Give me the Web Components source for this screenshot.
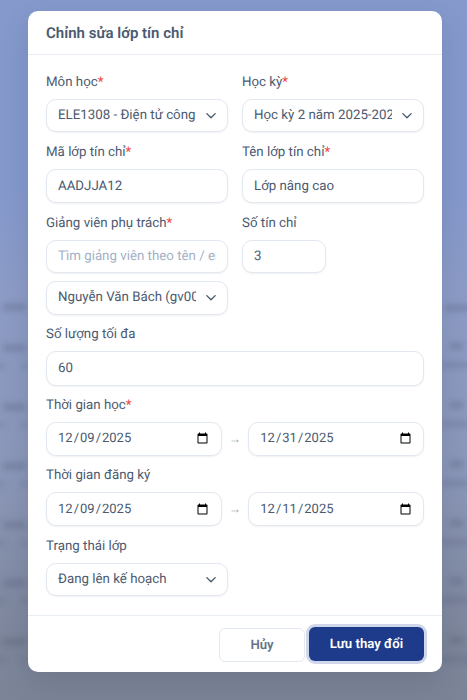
<!DOCTYPE html>
<html>
<head>
<meta charset="utf-8">
<title>Chỉnh sửa lớp tín chỉ</title>
<style>
    html, body { margin: 0; height: 100%; }
    body { overflow: hidden; font-family: Roboto, "Liberation Sans", sans-serif; }
</style>
</head>
<body>
<edit-page>
    <blurred-rows slot="backdrop"></blurred-rows>
    <edit-dialog heading="Chỉnh sửa lớp tín chỉ">
        <form-field label="Môn học" required>
            <form-select value="ELE1308 - Điện tử công nghiệp"></form-select>
        </form-field>
        <form-field label="Học kỳ" required>
            <form-select value="Học kỳ 2 năm 2025-2026"></form-select>
        </form-field>
        <form-field label="Mã lớp tín chỉ" required>
            <form-input value="AADJJA12" style="--h:34.5px"></form-input>
        </form-field>
        <form-field label="Tên lớp tín chỉ" required>
            <form-input value="Lớp nâng cao" style="--h:34.5px"></form-input>
        </form-field>
        <form-field label="Giảng viên phụ trách" required>
            <form-input placeholder="Tìm giảng viên theo tên / email"></form-input>
            <form-select value="Nguyễn Văn Bách (gv001@example.edu)"></form-select>
        </form-field>
        <form-field label="Số tín chỉ">
            <form-input value="3" narrow></form-input>
        </form-field>
        <form-field label="Số lượng tối đa" wide>
            <form-input value="60" style="--h:34.5px"></form-input>
        </form-field>
        <form-field label="Thời gian học" required wide>
            <date-range from="2025-12-09" to="2025-12-31"></date-range>
        </form-field>
        <form-field label="Thời gian đăng ký" wide>
            <date-range from="2025-12-09" to="2025-12-11" style="--h:34px"></date-range>
        </form-field>
        <form-field label="Trạng thái lớp">
            <form-select value="Đang lên kế hoạch"></form-select>
        </form-field>
    </edit-dialog>
</edit-page>

<script>
const CONTROL_CSS = `
    .control {
        display: block;
        box-sizing: border-box;
        width: 100%;
        height: var(--h, 33.4px);
        margin: 0;
        padding: 0 11px;
        background: #fff;
        border: 1px solid #e2e8f0;
        border-radius: 10px;
        box-shadow: 0 1px 2px rgba(15, 23, 42, .06);
        color: #4b5a70;
        font: 400 13.3px Roboto, "Liberation Sans", sans-serif;
        text-rendering: geometricPrecision;
        outline: none;
    }
`;

class EditPage extends HTMLElement {
    constructor() {
        super();
        this.attachShadow({ mode: 'open' });
        this.shadowRoot.innerHTML = `
            <style>
                :host {
                    display: block;
                    position: relative;
                    height: 700px;
                    overflow: hidden;
                    background: linear-gradient(#8599cd 0, #8599cd 190px, #8d9cc6 300px, #8b97b8 480px, #7d869b 640px, #7b8497 700px);
                }
                .wrap {
                    position: relative;
                    display: flex;
                    padding: 11px 0 0 28px;
                }
            </style>
            <slot name="backdrop"></slot>
            <div class="wrap"><slot></slot></div>
        `;
    }
}

// the page behind the dialog, only visible as blurred text rows on both sides
class BlurredRows extends HTMLElement {
    constructor() {
        super();
        this.attachShadow({ mode: 'open' });
        const rows = [348, 407, 466, 525, 583, 642].map(y => `
            <i style="top:${y - 3}px;left:3px;width:23px"></i>
            <i style="top:${y + 15}px;left:-4px;width:9px;opacity:.55"></i>
            <i style="top:${y + 15}px;left:21px;width:8px;opacity:.55"></i>
            <i style="top:${y - 5}px;left:450px;width:13px"></i>
            <i style="top:${y + 14}px;left:441px;width:30px;opacity:.7"></i>
        `).join('');
        this.shadowRoot.innerHTML = `
            <style>
                :host { position: absolute; inset: 0; filter: blur(3px); }
                i { position: absolute; height: 6px; background: rgba(70, 80, 110, .32); }
            </style>
            <i style="top:304px;left:3px;width:23px"></i>
            <i style="top:305px;left:445px;width:30px"></i>
            ${rows}
        `;
    }
}

class EditDialog extends HTMLElement {
    constructor() {
        super();
        this.attachShadow({ mode: 'open' });
        this.shadowRoot.innerHTML = `
            <style>
                :host {
                    display: block;
                    box-sizing: border-box;
                    width: 414px;
                    height: 661px;
                    background: #fff;
                    border-radius: 10px;
                    box-shadow: 0 10px 30px rgba(15, 23, 42, .12);
                    font-family: Roboto, "Liberation Sans", sans-serif;
                    text-rendering: geometricPrecision;
                }
                header {
                    box-sizing: border-box;
                    height: 44px;
                    padding: 0 18px;
                    display: flex;
                    align-items: center;
                    border-bottom: 1px solid #e9eef5;
                    color: #4b5a70;
                    font-size: 15px;
                    font-weight: 600;
                }
                .body {
                    box-sizing: border-box;
                    height: 560px;
                    padding: 18px 18px 0;
                    display: grid;
                    grid-template-columns: 182px 182px;
                    column-gap: 14px;
                    row-gap: 10.5px;
                    align-content: start;
                }
                footer {
                    box-sizing: border-box;
                    height: 57px;
                    padding: 12px 18px 0;
                    border-top: 1px solid #e9eef5;
                    display: flex;
                    justify-content: flex-end;
                    align-items: flex-start;
                    gap: 4px;
                }
                button {
                    box-sizing: border-box;
                    height: 34px;
                    border-radius: 6px;
                    font: 600 13.2px Roboto, "Liberation Sans", sans-serif;
                    text-rendering: geometricPrecision;
                }
                .cancel {
                    width: 86px;
                    background: #fff;
                    border: 1px solid #e2e8f0;
                    color: #64748b;
                }
                .save {
                    width: 115px;
                    margin-top: -1px;
                    background: #1e3a8a;
                    border: 0;
                    color: #fff;
                    box-shadow: 0 0 0 3px #d0d7ea;
                }
            </style>
            <header>${this.getAttribute('heading')}</header>
            <div class="body"><slot></slot></div>
            <footer>
                <button class="cancel" type="button">Hủy</button>
                <button class="save" type="button">Lưu thay đổi</button>
            </footer>
        `;
    }
}

class FormField extends HTMLElement {
    constructor() {
        super();
        this.attachShadow({ mode: 'open' });
        const star = this.hasAttribute('required') ? '<b>*</b>' : '';
        this.shadowRoot.innerHTML = `
            <style>
                :host {
                    display: flex;
                    flex-direction: column;
                    gap: 8px;
                    min-width: 0;
                }
                :host([wide]) { grid-column: 1 / -1; }
                label {
                    display: block;
                    height: 18px;
                    line-height: 20.8px;
                    color: #4b5a70;
                    font-size: 13.3px;
                }
                b { color: #ef4444; font-weight: 400; }
            </style>
            <label>${this.getAttribute('label')}${star}</label>
            <slot></slot>
        `;
    }
}

class FormInput extends HTMLElement {
    constructor() {
        super();
        this.attachShadow({ mode: 'open' });
        const value = this.getAttribute('value') || '';
        const placeholder = this.getAttribute('placeholder') || '';
        this.shadowRoot.innerHTML = `
            <style>
                ${CONTROL_CSS}
                :host { display: block; }
                :host([narrow]) { width: 84px; }
                input::placeholder { color: #a3b1c6; opacity: 1; }
            </style>
            <input class="control" value="${value}" placeholder="${placeholder}">
        `;
    }
}

class FormSelect extends HTMLElement {
    constructor() {
        super();
        this.attachShadow({ mode: 'open' });
        const value = this.getAttribute('value');
        this.shadowRoot.innerHTML = `
            <style>
                ${CONTROL_CSS}
                :host { display: block; position: relative; }
                select.control { appearance: none; padding-right: 31px; }
                svg { position: absolute; right: 11px; top: 11px; pointer-events: none; }
            </style>
            <select class="control"><option>${value}</option></select>
            <svg width="12" height="12" viewBox="0 0 12 12" fill="none" stroke="#475569" stroke-width="1.3" stroke-linecap="round" stroke-linejoin="round">
                <path d="M1.8 3.6l4.2 4.2 4.2-4.2"/>
            </svg>
        `;
    }
}

class DateRange extends HTMLElement {
    constructor() {
        super();
        this.attachShadow({ mode: 'open' });
        this.shadowRoot.innerHTML = `
            <style>
                ${CONTROL_CSS}
                :host {
                    display: grid;
                    grid-template-columns: 1fr 26.6px 1fr;
                    align-items: center;
                }
                span { text-align: center; color: #94a3b8; font-size: 12px; }
                input.control { padding-left: 10px; padding-right: 9.5px; font-size: 13px; }
            </style>
            <input class="control" type="date" value="${this.getAttribute('from')}">
            <span>→</span>
            <input class="control" type="date" value="${this.getAttribute('to')}">
        `;
    }
}

customElements.define('edit-page', EditPage);
customElements.define('blurred-rows', BlurredRows);
customElements.define('edit-dialog', EditDialog);
customElements.define('form-field', FormField);
customElements.define('form-input', FormInput);
customElements.define('form-select', FormSelect);
customElements.define('date-range', DateRange);
</script>
</body>
</html>
